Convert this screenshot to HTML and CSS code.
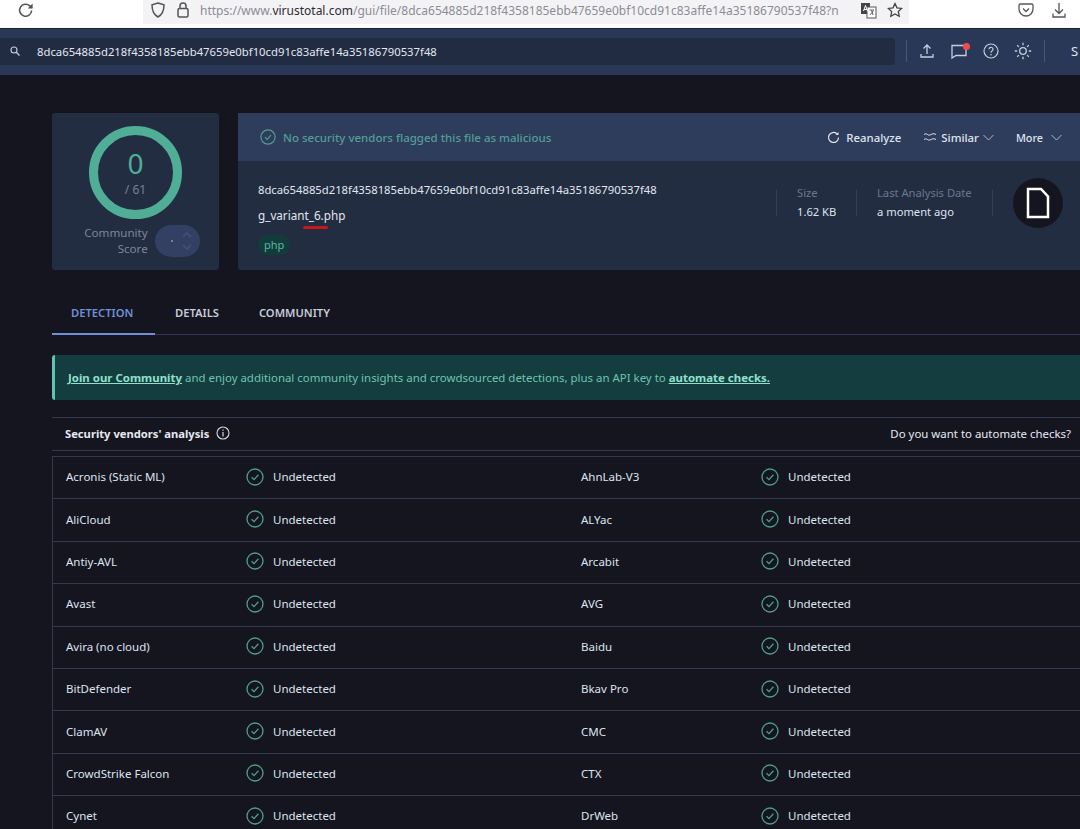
FILE: index.html
```html
<!DOCTYPE html>
<html>
<head>
    <title>VirusTotal - File</title>
    <link rel="stylesheet" href="styles.css">
</head>
<body>
<svg class="icon-defs" width="0" height="0">
    <symbol id="check" viewBox="0 0 18 18">
        <circle cx="9" cy="9" r="8" fill="none" stroke="currentColor" stroke-width="1.3"/>
        <path d="M5.600 9.200l2.400 2.400 4.400-4.800" fill="none" stroke="currentColor" stroke-width="1.300"/>
    </symbol>
</svg>

<div class="browser-bar">
    <svg class="reload" width="20" height="20" viewBox="0 0 20 20"><path d="M15.600 10.500a6 6 0 1 1-1.800-4.600L16 8" fill="none" stroke="#555" stroke-width="1.600"/><path d="M16.600 3.400v5h-5z" fill="#555"/></svg>
    <div class="url-box">
        <svg width="16" height="18" viewBox="0 0 16 18"><path d="M8 2l6 1.800c0 6-1.500 9.800-6 12.200C3.500 13.600 2 9.800 2 3.800z" fill="none" stroke="#555" stroke-width="1.500"/></svg>
        <svg class="lock" width="14" height="18" viewBox="0 0 14 18"><rect x="2" y="7.500" width="10" height="8.500" rx="1.500" fill="none" stroke="#555" stroke-width="1.500"/><path d="M4 7.500V5a3 3 0 0 1 6 0v2.500" fill="none" stroke="#555" stroke-width="1.500"/></svg>
        <span class="url">https://www.<b>virustotal.com</b>/gui/file/8dca654885d218f4358185ebb47659e0bf10cd91c83affe14a35186790537f48?n</span>
        <svg class="translate" width="17" height="17" viewBox="0 0 17 17"><rect x="1" y="1" width="9" height="11" fill="#444"/><rect x="7" y="5" width="9" height="11" fill="#fff" stroke="#555"/><path d="M3.500 9l2-5.500 2 5.500M4.200 7.500h2.600" fill="none" stroke="#fff" stroke-width="1"/><path d="M9.500 8h4.500M11.500 8l1.500 5M13.500 8.500l-3.500 4.500" fill="none" stroke="#555" stroke-width="0.900"/></svg>
        <svg class="star" width="16" height="16" viewBox="0 0 16 16"><path d="M8 1.500l2 4.300 4.700.6-3.400 3.200.9 4.700L8 12l-4.200 2.300.9-4.700L1.300 6.400 6 5.800z" fill="none" stroke="#444" stroke-width="1.300"/></svg>
    </div>
    <svg class="pocket" width="16" height="16" viewBox="0 0 16 16"><path d="M2.500 2h11a1.500 1.500 0 0 1 1.500 1.500V7a7 7 0 0 1-14 0V3.500A1.500 1.500 0 0 1 2.500 2z" fill="none" stroke="#555" stroke-width="1.300"/><path d="M5 6.500l3 3 3-3" fill="none" stroke="#555" stroke-width="1.300"/></svg>
    <svg class="download" width="16" height="16" viewBox="0 0 16 16"><path d="M8 1v10M4 7.500l4 4 4-4M2 11.500V15h12v-3.500" fill="none" stroke="#555" stroke-width="1.300"/></svg>
</div>

<div class="nav-bar">
    <div class="search-box">
        <svg width="10" height="10" viewBox="0 0 10 10"><circle cx="4" cy="4" r="3" fill="none" stroke="#c5cdde" stroke-width="1.100"/><path d="M6.300 6.300L9.500 9.500" stroke="#c5cdde" stroke-width="1.300"/></svg>
        <span>8dca654885d218f4358185ebb47659e0bf10cd91c83affe14a35186790537f48</span>
    </div>
    <div class="nav-sep"></div>
    <div class="nav-icons">
        <svg width="16" height="16" viewBox="0 0 16 16"><path d="M8 11V2M4.500 5.500L8 2l3.500 3.500M2 11v3h12v-3" fill="none" stroke="#c5cdde" stroke-width="1.300"/></svg>
        <div class="chat-icon">
            <svg width="18" height="18" viewBox="0 0 18 18"><path d="M2 3.500h14v10H6l-4 2.500z" fill="none" stroke="#c5cdde" stroke-width="1.300"/></svg>
            <i class="chat-dot"></i>
        </div>
        <svg width="16" height="16" viewBox="0 0 16 16"><circle cx="8" cy="8" r="7" fill="none" stroke="#c5cdde" stroke-width="1.200"/><path d="M6 6.300a2 2 0 1 1 3 1.700c-.7.500-1 .8-1 1.700" fill="none" stroke="#c5cdde" stroke-width="1.200"/><circle cx="8" cy="11.800" r=".8" fill="#c5cdde"/></svg>
        <svg width="18" height="18" viewBox="0 0 18 18"><circle cx="9" cy="9" r="3.300" fill="none" stroke="#c5cdde" stroke-width="1.300"/><path d="M9 .8v2.400M9 14.800v2.400M.8 9h2.400M14.800 9h2.400M3.200 3.200l1.700 1.700M13.100 13.100l1.700 1.700M3.200 14.800l1.700-1.700M13.100 4.900l1.700-1.700" stroke="#c5cdde" stroke-width="1.300"/></svg>
    </div>
    <div class="nav-sep"></div>
    <span class="nav-cut">S</span>
</div>

<div class="page">
    <div class="summary">
        <div class="score-card">
            <div class="score-ring">
                <span class="score-num">0</span>
                <span class="score-total">/ 61</span>
            </div>
            <div class="community">
                <span class="community-label">Community<br>Score</span>
                <div class="vote-pill">
                    <i class="vote-dot"></i>
                    <svg width="10" height="22" viewBox="0 0 10 22"><path d="M1 7l4-4 4 4M1 15l4 4 4-4" fill="none" stroke="#465274" stroke-width="1.500"/></svg>
                </div>
            </div>
        </div>
        <div class="file-card">
            <div class="file-head">
                <svg class="head-check" width="16" height="16"><use href="#check"/></svg>
                <span class="verdict">No security vendors flagged this file as malicious</span>
                <div class="head-actions">
                    <span class="action">
                        <svg width="13" height="13" viewBox="0 0 13 13"><path d="M11.500 6.500a5 5 0 1 1-1.700-3.800" fill="none" stroke="#dfe4ef" stroke-width="1.200"/><path d="M11.500 1v3h-3z" fill="#dfe4ef"/></svg>
                        Reanalyze
                    </span>
                    <span class="action action-similar">
                        <svg width="14" height="10" viewBox="0 0 14 10"><path d="M1 2.500c2.500-2 4 1.500 6 .5s3.500-2 6-.5M1 7.500c2.500-2 4 1.500 6 .5s3.500-2 6-.5" fill="none" stroke="#dfe4ef" stroke-width="1"/></svg>
                        Similar
                        <svg width="11" height="7" viewBox="0 0 11 7"><path d="M.5 1l5 5 5-5" fill="none" stroke="#aeb7cc"/></svg>
                    </span>
                    <span class="action action-more">
                        More
                        <svg class="more-caret" width="11" height="7" viewBox="0 0 11 7"><path d="M.5 1l5 5 5-5" fill="none" stroke="#aeb7cc"/></svg>
                    </span>
                </div>
            </div>
            <div class="file-body">
                <div class="file-names">
                    <div class="file-hash">8dca654885d218f4358185ebb47659e0bf10cd91c83affe14a35186790537f48</div>
                    <div class="file-name">g_variant_6.php<i class="red-mark"></i></div>
                    <span class="file-tag">php</span>
                </div>
                <div class="file-stats">
                    <div class="stat stat-size">
                        <span class="stat-label">Size</span>
                        <span class="stat-value">1.62 KB</span>
                    </div>
                    <div class="stat stat-date">
                        <span class="stat-label">Last Analysis Date</span>
                        <span class="stat-value">a moment ago</span>
                    </div>
                    <div class="file-badge">
                        <svg width="24" height="32" viewBox="0 0 24 32"><path d="M2 2h13l7 7.500V30H2z" fill="none" stroke="#fff" stroke-width="2.500"/></svg>
                    </div>
                </div>
            </div>
        </div>
    </div>

    <div class="tabs">
        <span class="tab active">DETECTION</span>
        <span class="tab">DETAILS</span>
        <span class="tab">COMMUNITY</span>
    </div>

    <div class="banner">
        <span><a>Join our Community</a> and enjoy additional community insights and crowdsourced detections, plus an API key to <a>automate checks.</a></span>
    </div>

    <div class="vendors-head">
        <span class="vendors-title">Security vendors' analysis</span>
        <svg width="14" height="14" viewBox="0 0 14 14"><circle cx="7" cy="7" r="6" fill="none" stroke="#d5dae6" stroke-width="1.100"/><path d="M7 6v4.500M7 3.500v1.300" stroke="#d5dae6" stroke-width="1.200"/></svg>
        <span class="vendors-auto">Do you want to automate checks?</span>
    </div>

    <div class="vendors">
        <div class="row"><span class="vendor">Acronis (Static ML)</span><span class="result"><svg width="18" height="18"><use href="#check"/></svg>Undetected</span><span class="vendor">AhnLab-V3</span><span class="result"><svg width="18" height="18"><use href="#check"/></svg>Undetected</span></div>
        <div class="row"><span class="vendor">AliCloud</span><span class="result"><svg width="18" height="18"><use href="#check"/></svg>Undetected</span><span class="vendor">ALYac</span><span class="result"><svg width="18" height="18"><use href="#check"/></svg>Undetected</span></div>
        <div class="row"><span class="vendor">Antiy-AVL</span><span class="result"><svg width="18" height="18"><use href="#check"/></svg>Undetected</span><span class="vendor">Arcabit</span><span class="result"><svg width="18" height="18"><use href="#check"/></svg>Undetected</span></div>
        <div class="row"><span class="vendor">Avast</span><span class="result"><svg width="18" height="18"><use href="#check"/></svg>Undetected</span><span class="vendor">AVG</span><span class="result"><svg width="18" height="18"><use href="#check"/></svg>Undetected</span></div>
        <div class="row"><span class="vendor">Avira (no cloud)</span><span class="result"><svg width="18" height="18"><use href="#check"/></svg>Undetected</span><span class="vendor">Baidu</span><span class="result"><svg width="18" height="18"><use href="#check"/></svg>Undetected</span></div>
        <div class="row"><span class="vendor">BitDefender</span><span class="result"><svg width="18" height="18"><use href="#check"/></svg>Undetected</span><span class="vendor">Bkav Pro</span><span class="result"><svg width="18" height="18"><use href="#check"/></svg>Undetected</span></div>
        <div class="row"><span class="vendor">ClamAV</span><span class="result"><svg width="18" height="18"><use href="#check"/></svg>Undetected</span><span class="vendor">CMC</span><span class="result"><svg width="18" height="18"><use href="#check"/></svg>Undetected</span></div>
        <div class="row"><span class="vendor">CrowdStrike Falcon</span><span class="result"><svg width="18" height="18"><use href="#check"/></svg>Undetected</span><span class="vendor">CTX</span><span class="result"><svg width="18" height="18"><use href="#check"/></svg>Undetected</span></div>
        <div class="row"><span class="vendor">Cynet</span><span class="result"><svg width="18" height="18"><use href="#check"/></svg>Undetected</span><span class="vendor">DrWeb</span><span class="result"><svg width="18" height="18"><use href="#check"/></svg>Undetected</span></div>
    </div>
</div>
</body>
</html>
```

FILE: styles.css
```css
html, body {
    margin: 0;
    height: 829px;
    overflow: hidden;
}

body {
    font-family: "Noto Sans", Arial, sans-serif;
    font-size: 11.5px;
    background-color: #14151f;
    color: #dfe4ef;
}

svg {
    display: block;
    flex: none;
}

.icon-defs {
    position: absolute;
}

/* browser chrome */
.browser-bar {
    display: flex;
    align-items: center;
    height: 29px;
    padding-bottom: 8px;
    box-sizing: border-box;
    background-color: #fff;
    border-bottom: 1px solid #1d2230;
}

.reload {
    margin-left: 16px;
}

.url-box {
    display: flex;
    align-items: center;
    align-self: flex-start;
    width: 766px;
    height: 24px;
    margin-left: 107px;
    background-color: #f3f3f6;
    box-sizing: border-box;
    padding-left: 7px;
    padding-bottom: 4px;
    overflow: hidden;
}

.lock {
    margin-left: 10px;
}

.url {
    width: 650px;
    margin-left: 10px;
    font-size: 12px;
    color: #8c8c94;
    white-space: nowrap;
    overflow: hidden;
}

.url b {
    font-weight: normal;
    color: #2b2b33;
}

.translate {
    margin-left: 10px;
}

.star {
    margin-left: 10px;
}

.pocket {
    margin-left: 109px;
}

.download {
    margin-left: 17px;
}

/* site nav */
.nav-bar {
    display: flex;
    align-items: center;
    height: 46px;
    background-color: #2a3857;
    box-sizing: border-box;
    padding-bottom: 2px;
}

.search-box {
    display: flex;
    align-items: center;
    width: 895px;
    height: 27px;
    background-color: #212c43;
    border-radius: 0 4px 4px 0;
    box-sizing: border-box;
    padding-left: 10px;
    font-size: 11.3px;
    color: #e3e7f0;
}

.search-box span {
    margin-left: 17px;
}

.nav-sep {
    width: 1px;
    height: 22px;
    margin-left: 11px;
    background-color: #4a5676;
}

.nav-icons {
    display: flex;
    align-items: center;
    gap: 15px;
    margin-left: 12px;
    margin-right: 1px;
}

.chat-icon {
    position: relative;
}

.chat-dot {
    position: absolute;
    top: 1px;
    right: -2px;
    width: 7px;
    height: 7px;
    border-radius: 50%;
    background-color: #f04b4b;
}

.nav-cut {
    margin-left: 26px;
    font-size: 13px;
}

/* summary cards */
.page {
    padding: 38px 0 0 52px;
}

.summary {
    display: flex;
    gap: 19px;
    height: 157px;
}

.score-card {
    display: flex;
    flex-direction: column;
    align-items: center;
    width: 167px;
    background-color: #222d42;
    border-radius: 3px;
    box-sizing: border-box;
    padding-top: 13px;
}

.score-ring {
    display: flex;
    flex-direction: column;
    align-items: center;
    justify-content: center;
    gap: 3px;
    width: 93px;
    height: 93px;
    padding-top: 2px;
    border: 9px solid #50ae96;
    border-radius: 50%;
    box-sizing: border-box;
}

.score-num {
    font-size: 28px;
    line-height: 30px;
    color: #50ae96;
}

.score-total {
    font-size: 12px;
    line-height: 18px;
    color: #76809a;
}

.community {
    display: flex;
    align-items: center;
    gap: 7px;
    margin-top: 6px;
    margin-left: 13px;
}

.community-label {
    text-align: right;
    font-size: 11.6px;
    line-height: 16px;
    color: #7d869c;
}

.vote-pill {
    display: flex;
    align-items: center;
    justify-content: flex-end;
    width: 45px;
    height: 32px;
    padding-right: 8px;
    box-sizing: border-box;
    border-radius: 16px;
    background-color: #333f63;
    position: relative;
}

.vote-dot {
    position: absolute;
    left: 16px;
    top: 15px;
    width: 2px;
    height: 2px;
    background-color: #76809a;
}

.file-card {
    flex: 1;
    background-color: #222d42;
    border-radius: 3px 0 0 3px;
}

.file-head {
    display: flex;
    align-items: center;
    height: 48px;
    background-color: #2f3d5c;
    padding-left: 22px;
    box-sizing: border-box;
}

.head-check {
    color: #4f9e96;
}

.verdict {
    margin-left: 7px;
    font-weight: 500;
    color: #4f9e96;
}

.head-actions {
    display: flex;
    align-items: center;
    gap: 22px;
    margin-left: auto;
    padding-right: 18px;
}

.action {
    display: flex;
    align-items: center;
    gap: 6px;
    font-size: 11.4px;
    font-weight: 500;
    color: #dfe4ef;
}

.action-similar {
    gap: 4px;
}

.action-more {
    font-size: 10.8px;
}

.more-caret {
    margin-left: 2px;
}

.file-body {
    display: flex;
    padding: 20px 17px 0 20px;
}

.file-hash {
    font-size: 11.27px;
    line-height: 18px;
    color: #e3e7f0;
}

.file-name {
    position: relative;
    width: max-content;
    margin-top: 7px;
    font-size: 11.7px;
    line-height: 18px;
    color: #e3e7f0;
}

.red-mark {
    position: absolute;
    left: 45px;
    top: 20px;
    width: 25px;
    height: 3px;
    border-radius: 2px;
    background-color: #c9161d;
}

.file-tag {
    display: inline-block;
    margin-top: 11px;
    padding: 0 6px;
    border-radius: 9px;
    font-size: 11px;
    line-height: 20px;
    background-color: #123c3c;
    color: #57b9a0;
}

.file-stats {
    display: flex;
    align-items: flex-start;
    margin-left: auto;
    padding-top: 9px;
}

.stat {
    display: flex;
    flex-direction: column;
    justify-content: center;
    gap: 2px;
    height: 26px;
    box-sizing: border-box;
    border-left: 1px solid #333f5c;
    padding-left: 20px;
    padding-bottom: 2px;
    font-size: 11.2px;
}

.stat-size {
    width: 80px;
}

.stat-date {
    width: 137px;
    border-right: 1px solid #333f5c;
}

.stat-label {
    color: #6d7690;
    line-height: 17px;
}

.stat-value {
    line-height: 17px;
    color: #dfe4ef;
}

.file-badge {
    display: flex;
    align-items: center;
    justify-content: center;
    width: 50px;
    height: 50px;
    margin-top: -12px;
    margin-left: 20px;
    border-radius: 50%;
    background-color: #14151f;
}

/* tabs */
.tabs {
    display: flex;
    height: 65px;
    box-sizing: border-box;
    padding-top: 20px;
    border-bottom: 1px solid #33365a;
}

.tab {
    height: 45px;
    box-sizing: border-box;
    padding: 15px 20px 0 20px;
    font-size: 11.2px;
    line-height: 16px;
    font-weight: 600;
    color: #c6ccda;
}

.tab.active {
    width: 103px;
    padding-left: 19px;
    color: #6f8fd8;
    border-bottom: 2px solid #6f8fd8;
}

/* community banner */
.banner {
    display: flex;
    align-items: center;
    height: 45px;
    margin-top: 20px;
    padding-left: 13px;
    border-left: 3px solid #62c4b0;
    border-radius: 3px 0 0 3px;
    background-color: #143d3f;
    font-size: 11.45px;
    color: #6fc3ae;
    white-space: nowrap;
}

.banner a {
    font-weight: 700;
    color: #8fe0cc;
    text-decoration: underline;
}

/* vendors table */
.vendors-head {
    display: flex;
    align-items: center;
    gap: 7px;
    height: 34px;
    box-sizing: border-box;
    margin-top: 17px;
    padding: 0 9px 2px 13px;
    border-top: 1px solid #36384f;
    border-bottom: 1px solid #36384f;
}

.vendors-title {
    font-size: 11.2px;
    font-weight: 700;
    color: #e6e9f1;
}

.vendors-auto {
    margin-left: auto;
    font-size: 11.43px;
    color: #e6e9f1;
}

.vendors {
    margin-top: 5px;
    border-top: 1px solid #36384f;
    border-left: 1px solid #36384f;
}

.row {
    display: grid;
    grid-template-columns: 180px 335px 180px 1fr;
    align-items: center;
    height: 42.4px;
    box-sizing: border-box;
    padding-left: 13px;
    padding-bottom: 2px;
    border-bottom: 1px solid #36384f;
}

.vendor {
    color: #dfe4ef;
}

.result {
    display: flex;
    align-items: center;
    gap: 9px;
    color: #dfe4ef;
}

.result svg {
    color: #4f9e8c;
}
```
